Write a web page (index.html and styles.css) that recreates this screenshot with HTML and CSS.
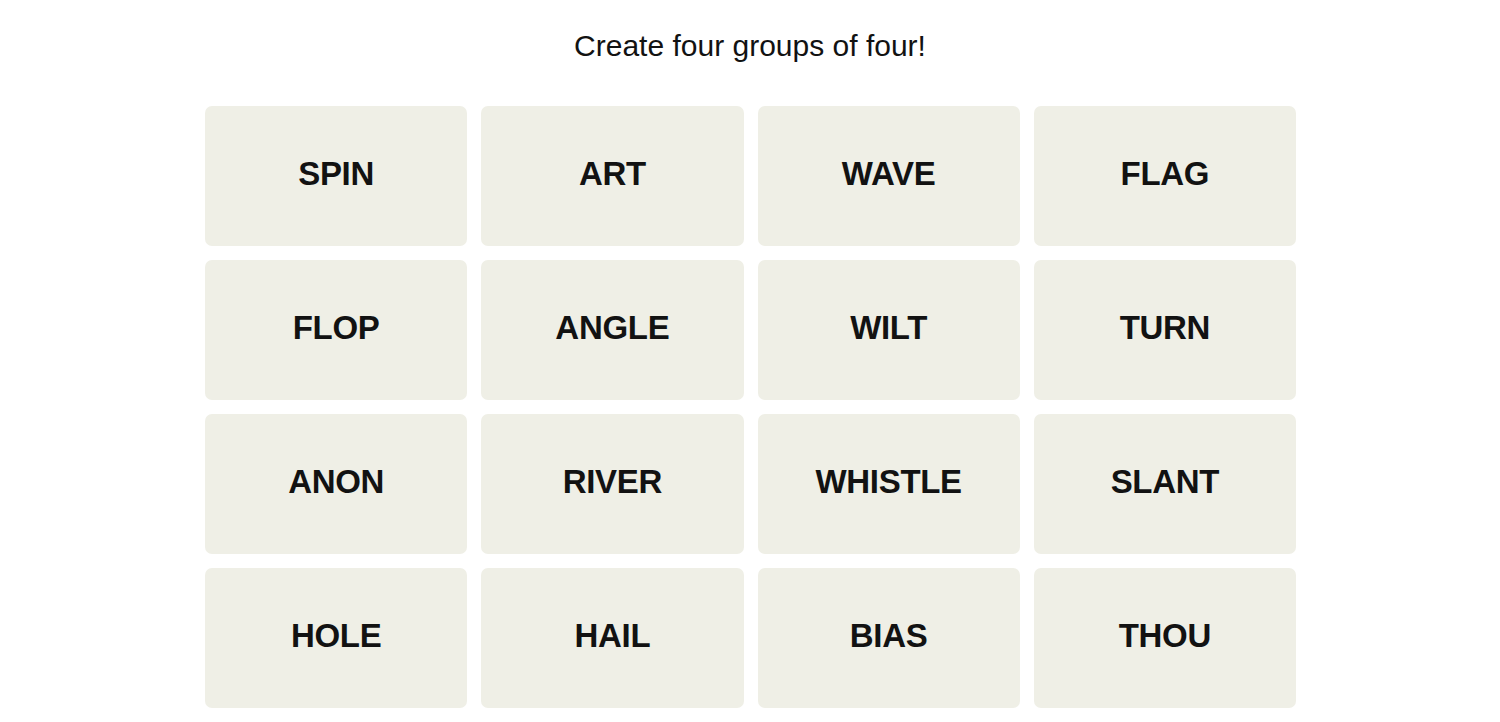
FILE: index.html
```html
<!DOCTYPE html>
<html lang="en">
<head>
    <meta charset="UTF-8">
    <meta name="viewport" content="width=device-width, initial-scale=1.0">
    <title>Connections</title>
    <link rel="stylesheet" href="styles.css">
</head>
<body>
    <main class="game">
        <h2 class="prompt">Create four groups of four!</h2>
        <section class="board">
            <button class="tile">SPIN</button>
            <button class="tile">ART</button>
            <button class="tile">WAVE</button>
            <button class="tile">FLAG</button>
            <button class="tile">FLOP</button>
            <button class="tile">ANGLE</button>
            <button class="tile">WILT</button>
            <button class="tile">TURN</button>
            <button class="tile">ANON</button>
            <button class="tile">RIVER</button>
            <button class="tile">WHISTLE</button>
            <button class="tile">SLANT</button>
            <button class="tile">HOLE</button>
            <button class="tile">HAIL</button>
            <button class="tile">BIAS</button>
            <button class="tile">THOU</button>
        </section>
    </main>
</body>
</html>
```
FILE: styles.css
```css
* {
    margin: 0;
    padding: 0;
    box-sizing: border-box;
}
body {
    font-family: "Liberation Sans", Arial, sans-serif;
    background-color: #ffffff;
    color: #121212;
}
.game {
    padding-top: 27px;
}
.prompt {
    text-align: center;
    font-size: 30px;
    font-weight: 400;
    line-height: 38px;
    color: #121212;
    margin-bottom: 41px;
}
.board {
    display: grid;
    grid-template-columns: repeat(4, 1fr);
    grid-auto-rows: 140px;
    gap: 14px;
    width: 1092px;
    margin: 0 auto;
    padding-left: 1px;
}
.tile {
    display: flex;
    align-items: center;
    justify-content: center;
    padding-bottom: 4px;
    background-color: #efefe6;
    border: none;
    border-radius: 7px;
    font-family: "Liberation Sans", Arial, sans-serif;
    font-size: 33px;
    font-weight: 700;
    letter-spacing: -0.3px;
    color: #121212;
    cursor: pointer;
}
```
